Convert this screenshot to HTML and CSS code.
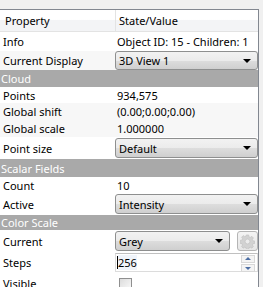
FILE: index.html
```html
<!DOCTYPE html>
<html lang="en">
<head>
    <meta charset="UTF-8">
    <title>Properties</title>
    <link rel="stylesheet" href="styles.css">
</head>
<body>
    <div class="panel">
        <div class="header">
            <div class="cell">Property</div>
            <div class="cell sep">State/Value</div>
        </div>

        <div class="row h19">
            <div class="label">Info</div>
            <div class="value">Object ID: 15 - Children: 1</div>
        </div>
        <div class="row alt h19">
            <div class="label">Current Display</div>
            <div class="combo">3D View 1<span class="arrow"></span></div>
        </div>

        <div class="band">Cloud</div>
        <div class="row h16">
            <div class="label">Points</div>
            <div class="value">934,575</div>
        </div>
        <div class="row alt">
            <div class="label">Global shift</div>
            <div class="value">(0.00;0.00;0.00)</div>
        </div>
        <div class="row alt">
            <div class="label">Global scale</div>
            <div class="value">1.000000</div>
        </div>
        <div class="row tall">
            <div class="label">Point size</div>
            <div class="combo">Default<span class="arrow"></span></div>
        </div>

        <div class="band h18">Scalar Fields</div>
        <div class="row h16">
            <div class="label">Count</div>
            <div class="value">10</div>
        </div>
        <div class="row tall">
            <div class="label">Active</div>
            <div class="combo">Intensity<span class="arrow"></span></div>
        </div>

        <div class="band h15">Color Scale</div>
        <div class="row tall">
            <div class="label">Current</div>
            <div class="pair">
                <div class="combo">Grey<span class="arrow"></span></div>
                <div class="gear-btn">
                    <svg width="15" height="15" viewBox="0 0 16 16">
                        <path d="M6.8 1h2.4l.4 2 1.3.6 1.7-1.1 1.7 1.7-1.1 1.7.6 1.3 2 .4v2.4l-2 .4-.6 1.3 1.1 1.7-1.7 1.7-1.7-1.1-1.3.6-.4 2H6.8l-.4-2-1.3-.6-1.7 1.1-1.7-1.7 1.1-1.7-.6-1.3-2-.4V6.8l2-.4.6-1.3-1.1-1.7 1.7-1.7 1.7 1.1 1.3-.6z" fill="#d2d2d2" stroke="#bdbdbd" stroke-width="0.6"/>
                        <circle cx="8" cy="8" r="2.6" fill="#ececec" stroke="#bdbdbd" stroke-width="0.6"/>
                    </svg>
                </div>
            </div>
        </div>
        <div class="row h20">
            <div class="label">Steps</div>
            <div class="spin">
                <span class="caret"></span><span class="sel">256</span>
                <div class="spin-btns">
                    <span class="spin-up"></span>
                    <span class="spin-down"></span>
                </div>
            </div>
        </div>
        <div class="row visible">
            <div class="label">Visible</div>
            <div class="check-cell"><span class="check"></span></div>
        </div>
    </div>
</body>
</html>
```

FILE: styles.css
```css
body {
    margin: 0;
    background-color: #f0f0f0;
    font-family: "Noto Sans", "DejaVu Sans", sans-serif;
    font-size: 11px;
    color: #000;
    overflow: hidden;
}
.panel {
    margin-top: 9px;
    width: 258px;
    height: 300px;
    background-color: #fff;
    border-top: 1px solid #828790;
    border-right: 1px solid #828790;
}
.header {
    display: grid;
    grid-template-columns: 115px 1fr;
    height: 21px;
    border-bottom: 1px solid #e3e3e3;
    background: linear-gradient(#ffffff 0%, #ffffff 45%, #f3f4f6 50%, #f3f4f6 100%);
}
.header .cell {
    display: flex;
    align-items: center;
    padding-left: 5px;
}
.header .sep {
    border-left: 1px solid #e3e3e3;
    padding-left: 3px;
}
.row {
    display: grid;
    grid-template-columns: 115px 1fr;
    height: 17px;
    align-items: center;
}
.row.h16 {
    height: 16px;
}
.row.h19 {
    height: 19px;
}
.row.h20 {
    height: 20px;
}
.row.tall {
    height: 22px;
}
.row.alt {
    background-color: #f7f7f7;
}
.label {
    padding-left: 3px;
    white-space: nowrap;
}
.value {
    padding-left: 2px;
    white-space: nowrap;
}
.band {
    height: 17px;
    background-color: #a9a9a9;
    color: #fff;
    display: flex;
    align-items: center;
    padding-left: 1px;
}
.band.h18 {
    height: 18px;
}
.band.h15 {
    height: 15px;
}
.combo {
    position: relative;
    height: 17px;
    border: 1px solid #8e8f8f;
    border-radius: 3px;
    background: linear-gradient(#f2f2f2 0%, #ebebeb 50%, #dddddd 51%, #cfcfcf 100%);
    display: flex;
    align-items: center;
    padding-left: 3px;
}
.tall .combo {
    height: 18px;
}
.arrow {
    position: absolute;
    right: 6px;
    top: 7px;
    border-left: 4px solid transparent;
    border-right: 4px solid transparent;
    border-top: 4px solid #000;
}
.pair {
    display: flex;
    gap: 7px;
}
.pair .combo {
    flex: 1;
}
.gear-btn {
    width: 19px;
    height: 18px;
    border: 1px solid #b5b5b5;
    border-radius: 3px;
    background: linear-gradient(#f4f4f4, #e6e6e6);
    display: flex;
    justify-content: center;
    align-items: center;
}
.spin {
    position: relative;
    height: 17px;
    border: 1px solid #dcdcdc;
    border-top-color: #c0c0c0;
    background-color: #fff;
    display: flex;
    align-items: center;
    padding-left: 1px;
}
.caret {
    width: 1px;
    height: 13px;
    background-color: #000;
}
.sel {
    background-color: #f0f4fa;
}
.spin-btns {
    position: absolute;
    right: 2px;
    top: 1px;
    display: flex;
    flex-direction: column;
    gap: 1px;
}
.spin-up, .spin-down {
    position: relative;
    width: 12px;
    height: 6px;
    border: 1px solid #d8d8d8;
    background: #f4f4f4;
}
.spin-up::after, .spin-down::after {
    content: "";
    position: absolute;
    left: 3px;
    border-left: 3px solid transparent;
    border-right: 3px solid transparent;
}
.spin-up::after {
    top: 1px;
    border-bottom: 3px solid #4d6ea3;
}
.spin-down::after {
    top: 2px;
    border-top: 3px solid #4d6ea3;
}
.row.visible {
    height: 20px;
    align-items: start;
}
.row.visible .label {
    padding-top: 4px;
}
.check-cell {
    padding-left: 4px;
    padding-top: 6px;
}
.check {
    display: block;
    width: 11px;
    height: 11px;
    border: 1px solid #8f8f8f;
    background: linear-gradient(135deg, #dcdcdc, #fafafa);
}
```
